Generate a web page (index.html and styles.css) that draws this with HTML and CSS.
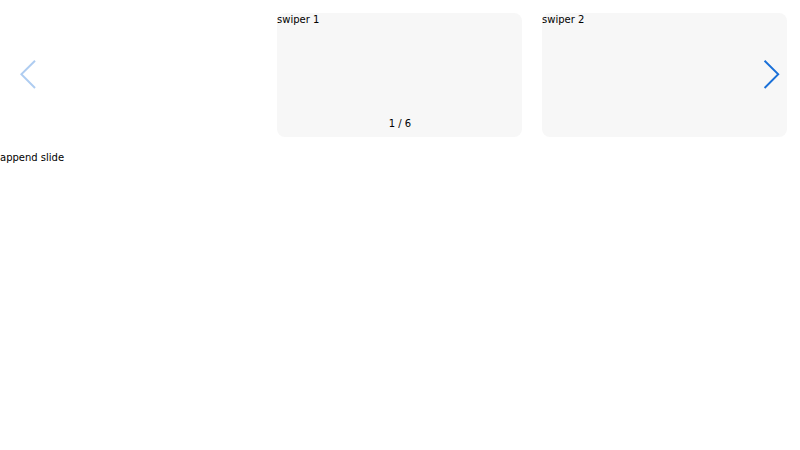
FILE: index.html
```html
<!DOCTYPE html>
<html>
<head>
<meta charset="utf-8">
<link rel="stylesheet" href="styles.css">
</head>
<body>
<div class="swiper">
  <div class="wrapper">
    <div class="slide blank"></div>
    <div class="slide">swiper 1</div>
    <div class="slide">swiper 2</div>
  </div>
  <div class="pagination">1 / 6</div>
  <div class="nav prev disabled">
    <svg viewBox="0 0 27 44" width="17.6" height="28.7"><path d="M0,22L22,0l2.1,2.1L4.2,22l19.9,19.9L22,44L0,22L0,22L0,22z" fill="#1a70d8"/></svg>
  </div>
  <div class="nav next">
    <svg viewBox="0 0 27 44" width="17.6" height="28.7"><path d="M27,22L27,22L5,44l-2.1-2.1L22.8,22L2.9,2.1L5,0L27,22L27,22z" fill="#1a70d8"/></svg>
  </div>
</div>
<div class="append">append slide</div>
</body>
</html>
```
FILE: styles.css
```css
html, body {
  margin: 0;
  padding: 0;
  background: #fff;
  font-family: "DejaVu Sans", sans-serif;
  font-size: 10px;
  color: #000;
}
.swiper {
  position: relative;
  margin-top: 13px;
  height: 124px;
  overflow: hidden;
}
.wrapper {
  display: flex;
  gap: 20px;
  padding-left: 12px;
  height: 100%;
}
.slide {
  flex: 0 0 245px;
  height: 124px;
  background: #f7f7f7;
  border-radius: 8px;
  line-height: 14px;
}
.slide.blank {
  background: transparent;
}
.pagination {
  position: absolute;
  left: 0;
  right: 0;
  bottom: 7px;
  text-align: center;
  line-height: 12px;
}
.nav {
  position: absolute;
  top: 47px;
  width: 17.6px;
  height: 28.7px;
  display: flex;
}
.nav svg {
  display: block;
}
.prev {
  left: 20px;
}
.next {
  left: 762.4px;
}
.disabled {
  opacity: 0.35;
}
.append {
  margin-top: 14px;
  line-height: 14px;
}
```
